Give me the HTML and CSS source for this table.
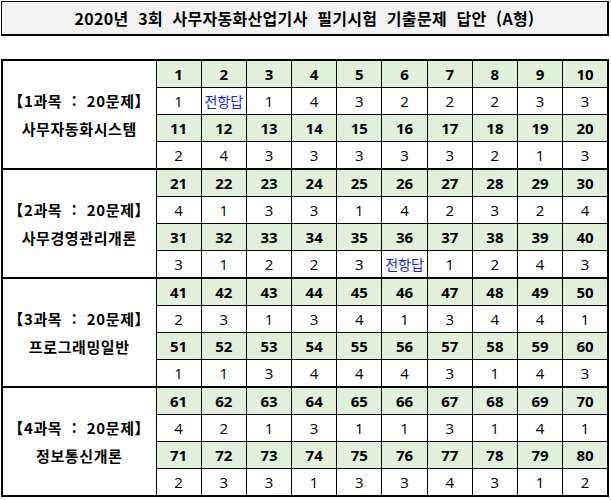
FILE: index.html
```html
<!DOCTYPE html>
<html lang="ko">
<head>
<meta charset="utf-8">
<link rel="stylesheet" href="styles.css">
</head>
<body>
<div class="page">
  <div class="title">2020년&nbsp; 3회&nbsp; 사무자동화산업기사&nbsp; 필기시험&nbsp; 기출문제&nbsp; 답안&nbsp; (A형)</div>
  <table class="answers">
    <colgroup>
      <col class="c-label">
      <col><col><col><col><col><col><col><col><col><col>
    </colgroup>
    <tbody>
      <tr class="num"><td class="label" rowspan="4"><div>【1과목&nbsp; :&nbsp; 20문제】</div><div>사무자동화시스템</div></td><td>1</td><td>2</td><td>3</td><td>4</td><td>5</td><td>6</td><td>7</td><td>8</td><td>9</td><td>10</td></tr>
      <tr class="ans"><td>1</td><td class="blue">전항답</td><td>1</td><td>4</td><td>3</td><td>2</td><td>2</td><td>2</td><td>3</td><td>3</td></tr>
      <tr class="num"><td>11</td><td>12</td><td>13</td><td>14</td><td>15</td><td>16</td><td>17</td><td>18</td><td>19</td><td>20</td></tr>
      <tr class="ans"><td>2</td><td>4</td><td>3</td><td>3</td><td>3</td><td>3</td><td>3</td><td>2</td><td>1</td><td>3</td></tr>
    </tbody>
    <tbody>
      <tr class="num"><td class="label" rowspan="4"><div>【2과목&nbsp; :&nbsp; 20문제】</div><div>사무경영관리개론</div></td><td>21</td><td>22</td><td>23</td><td>24</td><td>25</td><td>26</td><td>27</td><td>28</td><td>29</td><td>30</td></tr>
      <tr class="ans"><td>4</td><td>1</td><td>3</td><td>3</td><td>1</td><td>4</td><td>2</td><td>3</td><td>2</td><td>4</td></tr>
      <tr class="num"><td>31</td><td>32</td><td>33</td><td>34</td><td>35</td><td>36</td><td>37</td><td>38</td><td>39</td><td>40</td></tr>
      <tr class="ans"><td>3</td><td>1</td><td>2</td><td>2</td><td>3</td><td class="blue">전항답</td><td>1</td><td>2</td><td>4</td><td>3</td></tr>
    </tbody>
    <tbody>
      <tr class="num"><td class="label" rowspan="4"><div>【3과목&nbsp; :&nbsp; 20문제】</div><div>프로그래밍일반</div></td><td>41</td><td>42</td><td>43</td><td>44</td><td>45</td><td>46</td><td>47</td><td>48</td><td>49</td><td>50</td></tr>
      <tr class="ans"><td>2</td><td>3</td><td>1</td><td>3</td><td>4</td><td>1</td><td>3</td><td>4</td><td>4</td><td>1</td></tr>
      <tr class="num"><td>51</td><td>52</td><td>53</td><td>54</td><td>55</td><td>56</td><td>57</td><td>58</td><td>59</td><td>60</td></tr>
      <tr class="ans"><td>1</td><td>1</td><td>3</td><td>4</td><td>4</td><td>4</td><td>3</td><td>1</td><td>4</td><td>3</td></tr>
    </tbody>
    <tbody>
      <tr class="num"><td class="label" rowspan="4"><div>【4과목&nbsp; :&nbsp; 20문제】</div><div>정보통신개론</div></td><td>61</td><td>62</td><td>63</td><td>64</td><td>65</td><td>66</td><td>67</td><td>68</td><td>69</td><td>70</td></tr>
      <tr class="ans"><td>4</td><td>2</td><td>1</td><td>3</td><td>1</td><td>1</td><td>3</td><td>1</td><td>4</td><td>1</td></tr>
      <tr class="num"><td>71</td><td>72</td><td>73</td><td>74</td><td>75</td><td>76</td><td>77</td><td>78</td><td>79</td><td>80</td></tr>
      <tr class="ans"><td>2</td><td>3</td><td>3</td><td>1</td><td>3</td><td>3</td><td>4</td><td>3</td><td>1</td><td>2</td></tr>
    </tbody>
  </table>
</div>
</body>
</html>
```
FILE: styles.css
```css
html, body {
  margin: 0;
  padding: 0;
  background: #ffffff;
}

body {
  font-family: "Open Sans", "Noto Sans CJK KR", sans-serif;
  color: #000000;
}

.page {
  padding: 1px 0 0 1px;
  width: 609px;
}

.title {
  box-sizing: border-box;
  width: 608px;
  height: 35px;
  background: #f2f2f2;
  border: 1px solid #000;
  border-right-width: 2px;
  border-bottom-width: 2px;
  display: flex;
  align-items: center;
  justify-content: center;
  font-family: "Noto Sans CJK KR", sans-serif;
  font-weight: 700;
  font-size: 16px;
  letter-spacing: 0.3px;
}

.answers {
  margin-top: 23px;
  width: 608px;
  border-collapse: collapse;
  table-layout: fixed;
  border: 2px solid #000;
}

.answers col.c-label {
  width: 154px;
}

.answers tbody {
  border-top: 2px solid #000;
}

.answers td {
  border: 1px solid #000;
  padding: 0;
  text-align: center;
  vertical-align: middle;
  font-size: 15px;
  line-height: 20px;
}

.answers tr {
  height: 27.25px;
}

.answers tr.num td {
  background: #e2efda;
  font-weight: 700;
}

.answers tr.ans td {
  background: #ffffff;
  font-weight: 400;
}

.answers td.label {
  background: #ffffff !important;
  font-family: "Noto Sans CJK KR", sans-serif;
  font-weight: 700 !important;
  font-size: 15px;
  line-height: 28px;
  letter-spacing: 0.6px;
  white-space: nowrap;
  border-right: 1px solid #000;
}

.answers td.blue {
  color: #1a1aff;
  font-family: "Noto Sans CJK KR", sans-serif;
  font-size: 14px;
  font-weight: 500;
}
```
